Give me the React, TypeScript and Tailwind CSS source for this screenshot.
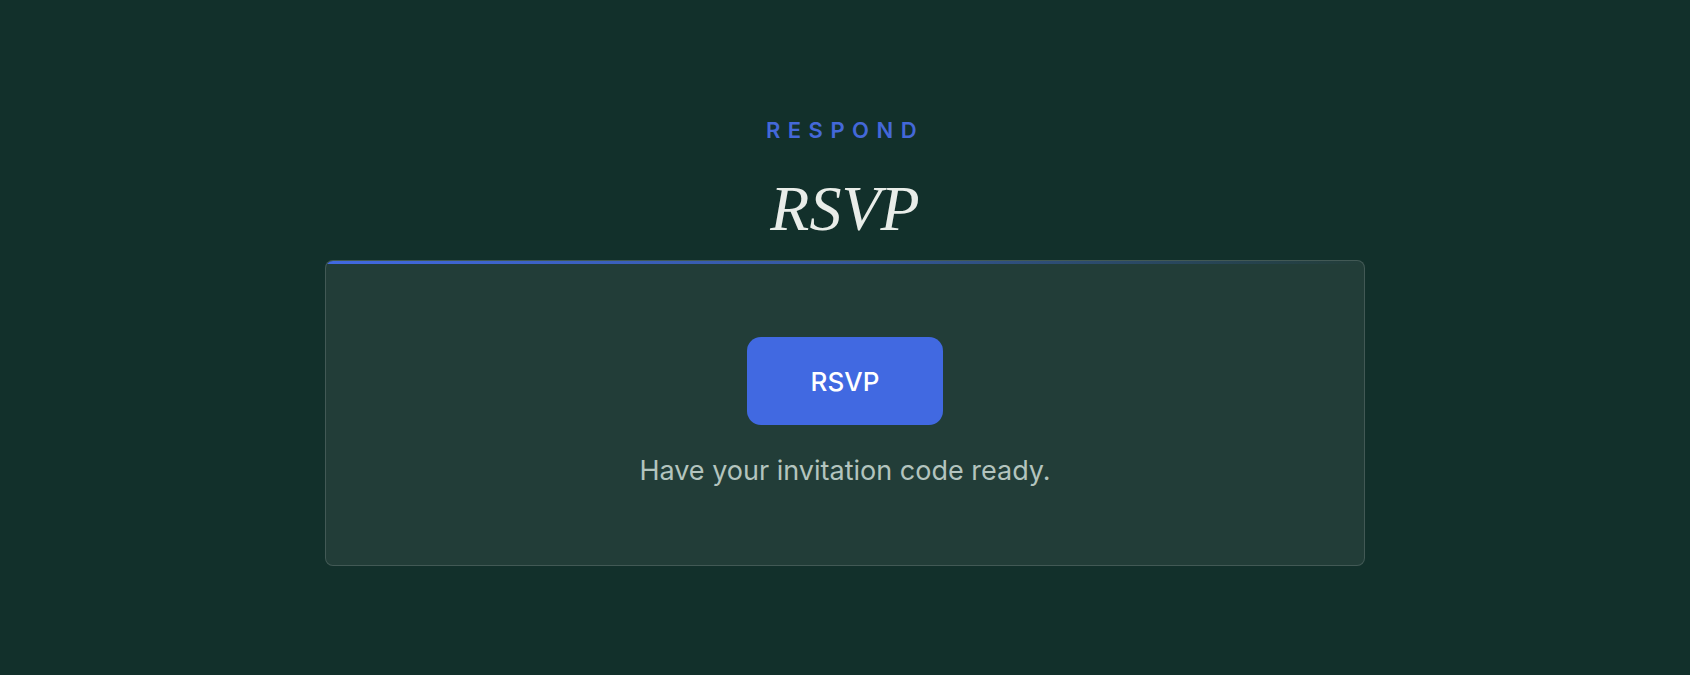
export default function App() {
  return (
    <div className="min-h-[675px] w-full bg-[#12302b] font-['Inter',sans-serif]">
      <section className="flex flex-col items-center pt-[115px] pb-[109px]">
        <p className="text-[22px] leading-[30px] font-semibold tracking-[0.34em] text-[#4468d8]">
          RESPOND
        </p>
        <h2 className="mt-[32px] font-['Liberation_Serif',serif] italic text-[64px] leading-[64px] text-[#e9ede9]">
          RSVP
        </h2>

        <div className="relative mt-[19px] w-[1040px] overflow-hidden rounded-[8px] border border-white/15 bg-[#223d38]">
          <div className="absolute inset-x-0 top-0 h-[3px] bg-gradient-to-r from-[#4169e1] via-[#4169e1]/60 to-transparent" />
          <div className="flex flex-col items-center pt-[76px] pb-[74px]">
            <button className="h-[88px] w-[196px] rounded-[14px] bg-[#4169e1] text-[26px] font-medium text-white">
              RSVP
            </button>
            <p className="mt-[26px] text-[27px] leading-[40px] text-[#b3c4be]">
              Have your invitation code ready.
            </p>
          </div>
        </div>
      </section>
    </div>
  );
}
